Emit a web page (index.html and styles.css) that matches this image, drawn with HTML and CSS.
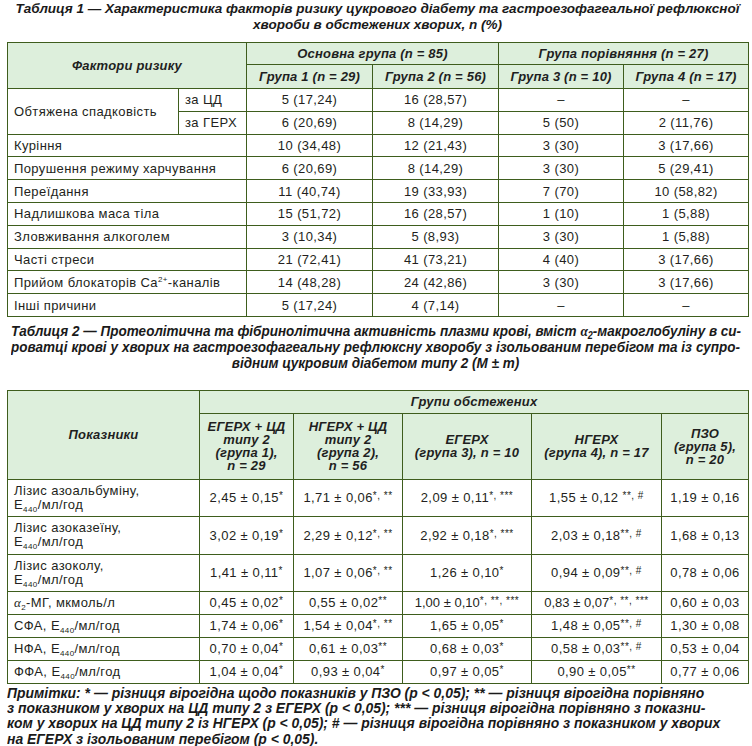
FILE: index.html
```html
<!DOCTYPE html>
<html lang="uk">
<head>
<meta charset="utf-8">
<link rel="stylesheet" href="styles.css">
</head>
<body>
<div class="page">
  <p class="title1">Таблиця 1 — Характеристика факторів ризику цукрового діабету та гастроезофагеальної рефлюксної<br>хвороби в обстежених хворих, n (%)</p>

  <table class="tbl t1">
    <colgroup>
      <col class="c171"><col class="c68"><col class="c126"><col class="c126"><col class="c125"><col class="c125">
    </colgroup>
    <thead>
      <tr class="h22">
        <th rowspan="2" colspan="2">Фактори ризику</th>
        <th colspan="2">Основна група (n = 85)</th>
        <th colspan="2">Група порівняння (n = 27)</th>
      </tr>
      <tr class="h24">
        <th>Група 1 (n = 29)</th>
        <th>Група 2 (n = 56)</th>
        <th>Група 3 (n = 10)</th>
        <th>Група 4 (n = 17)</th>
      </tr>
    </thead>
    <tbody>
      <tr class="r1">
        <td rowspan="2" class="lbl">Обтяжена спадковість</td>
        <td class="lbl">за ЦД</td>
        <td>5 (17,24)</td><td>16 (28,57)</td><td>–</td><td>–</td>
      </tr>
      <tr class="r1">
        <td class="lbl">за ГЕРХ</td>
        <td>6 (20,69)</td><td>8 (14,29)</td><td>5 (50)</td><td>2 (11,76)</td>
      </tr>
      <tr class="r1"><td colspan="2" class="lbl">Куріння</td><td>10 (34,48)</td><td>12 (21,43)</td><td>3 (30)</td><td>3 (17,66)</td></tr>
      <tr class="r1"><td colspan="2" class="lbl">Порушення режиму харчування</td><td>6 (20,69)</td><td>8 (14,29)</td><td>3 (30)</td><td>5 (29,41)</td></tr>
      <tr class="r1"><td colspan="2" class="lbl">Переїдання</td><td>11 (40,74)</td><td>19 (33,93)</td><td>7 (70)</td><td>10 (58,82)</td></tr>
      <tr class="r1"><td colspan="2" class="lbl">Надлишкова маса тіла</td><td>15 (51,72)</td><td>16 (28,57)</td><td>1 (10)</td><td>1 (5,88)</td></tr>
      <tr class="r1"><td colspan="2" class="lbl">Зловживання алкоголем</td><td>3 (10,34)</td><td>5 (8,93)</td><td>3 (30)</td><td>1 (5,88)</td></tr>
      <tr class="r1"><td colspan="2" class="lbl">Часті стреси</td><td>21 (72,41)</td><td>41 (73,21)</td><td>4 (40)</td><td>3 (17,66)</td></tr>
      <tr class="r1"><td colspan="2" class="lbl">Прийом блокаторів Ca<span class="sup">2+</span>-каналів</td><td>14 (48,28)</td><td>24 (42,86)</td><td>3 (30)</td><td>3 (17,66)</td></tr>
      <tr class="r1"><td colspan="2" class="lbl">Інші причини</td><td>5 (17,24)</td><td>4 (7,14)</td><td>–</td><td>–</td></tr>
    </tbody>
  </table>

  <div class="title2">
    <div class="t2in">
      <div class="jl">Таблиця 2 — Протеолітична та фібринолітична активність плазми крові, вміст <span class="alpha">α</span><span class="sub2">2</span>-макроглобуліну в си-</div>
      <div class="jl">роватці крові у хворих на гастроезофагеальну рефлюксну хворобу з ізольованим перебігом та із супро-</div>
      <div class="cl">відним цукровим діабетом типу 2 (M ± m)</div>
    </div>
  </div>

  <table class="tbl t2">
    <colgroup>
      <col class="c192"><col class="c94"><col class="c109"><col class="c129"><col class="c130"><col class="c87">
    </colgroup>
    <thead>
      <tr class="h23">
        <th rowspan="2">Показники</th>
        <th colspan="5">Групи обстежених</th>
      </tr>
      <tr class="h66">
        <th class="ml">ЕГЕРХ + ЦД<br>типу 2<br>(група 1),<br>n = 29</th>
        <th class="ml">НГЕРХ + ЦД<br>типу 2<br>(група 2),<br>n = 56</th>
        <th class="ml">ЕГЕРХ<br>(група 3), n = 10</th>
        <th class="ml">НГЕРХ<br>(група 4), n = 17</th>
        <th class="ml">ПЗО<br>(група 5),<br>n = 20</th>
      </tr>
    </thead>
    <tbody>
      <tr class="h37">
        <td class="lbl two">Лізис азоальбуміну,<br>E<span class="sub">440</span>/мл/год</td>
        <td>2,45 ± 0,15<span class="mk">*</span></td>
        <td>1,71 ± 0,06<span class="mk">*, **</span></td>
        <td>2,09 ± 0,11<span class="mk">*, ***</span></td>
        <td>1,55 ± 0,12 <span class="mk">**, #</span></td>
        <td>1,19 ± 0,16</td>
      </tr>
      <tr class="h38">
        <td class="lbl two">Лізис азоказеїну,<br>E<span class="sub">440</span>/мл/год</td>
        <td>3,02 ± 0,19<span class="mk">*</span></td>
        <td>2,29 ± 0,12<span class="mk">*, **</span></td>
        <td>2,92 ± 0,18<span class="mk">*, ***</span></td>
        <td>2,03 ± 0,18<span class="mk">**, #</span></td>
        <td>1,68 ± 0,13</td>
      </tr>
      <tr class="h37">
        <td class="lbl two">Лізис азоколу,<br>E<span class="sub">440</span>/мл/год</td>
        <td>1,41 ± 0,11<span class="mk">*</span></td>
        <td>1,07 ± 0,06<span class="mk">*, **</span></td>
        <td>1,26 ± 0,10<span class="mk">*</span></td>
        <td>0,94 ± 0,09<span class="mk">**, #</span></td>
        <td>0,78 ± 0,06</td>
      </tr>
      <tr class="h23">
        <td class="lbl"><span class="alpha">α</span><span class="sub">2</span>-МГ, мкмоль/л</td>
        <td>0,45 ± 0,02<span class="mk">*</span></td>
        <td>0,55 ± 0,02<span class="mk">**</span></td>
        <td class="tight">1,00 ± 0,10<span class="mk">*, **, ***</span></td>
        <td class="tight">0,83 ± 0,07<span class="mk">*, **, ***</span></td>
        <td>0,60 ± 0,03</td>
      </tr>
      <tr class="h23">
        <td class="lbl">СФА, E<span class="sub">440</span>/мл/год</td>
        <td>1,74 ± 0,06<span class="mk">*</span></td>
        <td>1,54 ± 0,04<span class="mk">*, **</span></td>
        <td>1,65 ± 0,05<span class="mk">*</span></td>
        <td>1,48 ± 0,05<span class="mk">**, #</span></td>
        <td>1,30 ± 0,08</td>
      </tr>
      <tr class="h23">
        <td class="lbl">НФА, E<span class="sub">440</span>/мл/год</td>
        <td>0,70 ± 0,04<span class="mk">*</span></td>
        <td>0,61 ± 0,03<span class="mk">**</span></td>
        <td>0,68 ± 0,03<span class="mk">*</span></td>
        <td>0,58 ± 0,03<span class="mk">**, #</span></td>
        <td>0,53 ± 0,04</td>
      </tr>
      <tr class="h23">
        <td class="lbl">ФФА, E<span class="sub">440</span>/мл/год</td>
        <td>1,04 ± 0,04<span class="mk">*</span></td>
        <td>0,93 ± 0,04<span class="mk">*</span></td>
        <td>0,97 ± 0,05<span class="mk">*</span></td>
        <td>0,90 ± 0,05<span class="mk">**</span></td>
        <td>0,77 ± 0,06</td>
      </tr>
    </tbody>
  </table>

  <div class="notes">
    <p class="notesin">Примітки: * — різниця вірогідна щодо показників у ПЗО (p &lt; 0,05); ** — різниця вірогідна порівняно<br>з показником у хворих на ЦД типу 2 з ЕГЕРХ (p &lt; 0,05); *** — різниця вірогідна порівняно з показни-<br>ком у хворих на ЦД типу 2 із НГЕРХ (p &lt; 0,05); # — різниця вірогідна порівняно з показником у хворих<br>на ЕГЕРХ з ізольованим перебігом (p &lt; 0,05).</p>
  </div>
</div>
</body>
</html>
```

FILE: styles.css
```css
html, body {
  margin: 0;
  padding: 0;
  background: #ffffff;
}

body {
  width: 752px;
  font-family: "Liberation Sans", Arial, sans-serif;
  color: #231f20;
}

.page {
  padding: 0 4px 0 7px;
}

.title1 {
  margin: 0 0 9px;
  padding-top: 1px;
  text-align: center;
  font-weight: bold;
  font-style: italic;
  font-size: 13.5px;
  line-height: 16px;
  color: #1a1a1a;
}

.tbl {
  border-collapse: collapse;
  table-layout: fixed;
  width: 741px;
  font-size: 13px;
  letter-spacing: 0.4px;
}

.tbl th,
.tbl td {
  border: 1px solid #3e5d1d;
  padding: 0 4px;
  text-align: center;
  vertical-align: middle;
  white-space: nowrap;
}

.tbl th {
  background: #ddefdc;
  font-weight: bold;
  font-style: italic;
  color: #1f1f1f;
  letter-spacing: 0.2px;
}

.tbl td.lbl {
  text-align: left;
  padding-left: 6px;
}

.c171 { width: 171px; }
.c68 { width: 68px; }
.c126 { width: 126px; }
.c125 { width: 125px; }
.c192 { width: 192px; }
.c94 { width: 94px; }
.c109 { width: 109px; }
.c129 { width: 129px; }
.c130 { width: 130px; }
.c87 { width: 87px; }

.h22 { height: 22px; }
.h23 { height: 23px; }
.h24 { height: 24px; }
.h37 { height: 37px; }
.h38 { height: 38px; }
.h66 { height: 66px; }
.r1 { height: 22.8px; }

.sup {
  font-size: 8px;
  vertical-align: 5px;
  line-height: 0;
}

.sub {
  font-size: 8px;
  vertical-align: -3px;
  line-height: 0;
}

.sub2 {
  font-size: 10px;
  vertical-align: -3px;
  line-height: 0;
}

.alpha {
  font-family: "Liberation Serif", serif;
  font-style: italic;
}

.mk {
  font-size: 10px;
  vertical-align: 3px;
  line-height: 0;
  letter-spacing: 0.5px;
}

.ml {
  line-height: 13px;
}

.two {
  line-height: 14px;
}

.tight {
  padding: 0 2px;
  letter-spacing: 0;
}

.title2 {
  width: 731px;
  margin: 0 0 19px 4px;
  padding-top: 6px;
  height: 48px;
  overflow: hidden;
}

.t2in {
  width: 810px;
  transform: scaleX(0.9);
  transform-origin: 0 0;
  font-weight: bold;
  font-style: italic;
  font-size: 15px;
  line-height: 16px;
  color: #1a1a1a;
}

.jl {
  text-align: justify;
  text-align-last: justify;
  white-space: nowrap;
}

.cl {
  text-align: center;
}

.notes {
  width: 741px;
  margin-top: 2px;
  overflow: hidden;
}

.notesin {
  margin: 0;
  width: 772px;
  transform: scaleX(0.96);
  transform-origin: 0 0;
  font-weight: bold;
  font-style: italic;
  font-size: 14.5px;
  line-height: 15.2px;
  color: #1a1a1a;
  white-space: nowrap;
}
```
